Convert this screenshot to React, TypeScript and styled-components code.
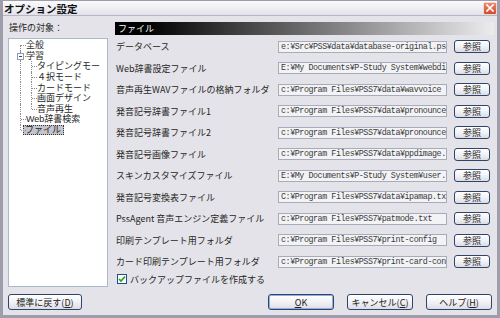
import React from 'react';
import styled, { createGlobalStyle, css } from 'styled-components';

const jp = `"Noto Sans CJK JP", "Noto Sans", sans-serif`;
const treeFont = `"Liberation Sans", "Noto Sans CJK JP", sans-serif`;
const mono = `"Liberation Mono", "Noto Sans CJK JP", monospace`;

const GlobalStyle = createGlobalStyle`
  html, body { margin: 0; padding: 0; background: #e4e3e9; }
  body { width: 500px; height: 318px; overflow: hidden; }
  * { box-sizing: border-box; }
`;

const Window = styled.div`
  width: 500px;
  height: 318px;
  display: flex;
  flex-direction: column;
  background: #e4e3e9;
  border: 3px solid #9e9dab;
  border-top: 1px solid #9e9dab;
  font-family: ${jp};
  font-size: 9px;
  color: #262626;
`;

const TitleBar = styled.div`
  height: 15px;
  flex: none;
  display: flex;
  align-items: center;
  padding-left: 1px;
  background: linear-gradient(#fbfbfd, #e2e2ea);
  border-bottom: 1px solid #b6b6c2;
`;

const TitleText = styled.span`
  font-weight: bold;
  font-size: 10.5px;
  color: #111;
`;

const CloseButton = styled.div`
  margin-left: auto;
  width: 14px;
  height: 13px;
  border-radius: 2px;
  border: 1px solid #f2d6cf;
  background: linear-gradient(#e88a70, #d04a2c);
  display: flex;
  align-items: center;
  justify-content: center;
`;

const Body = styled.div`
  flex: 1;
  display: grid;
  grid-template-columns: 100px 1fr;
  grid-template-rows: 1fr 16px;
  column-gap: 7px;
  row-gap: 7px;
  padding: 6px 3px 5px 5px;
  min-height: 0;
`;

const LeftColumn = styled.div`
  display: flex;
  flex-direction: column;
  min-height: 0;
`;

const SectionLabel = styled.div`
  height: 16px;
  line-height: 12px;
  padding-left: 1px;
  flex: none;
`;

const TreeBox = styled.div`
  flex: 1;
  background: #fff;
  border: 1px solid #a9b8cc;
  padding-top: 1px;
  overflow: hidden;
  font-family: ${treeFont};
`;

const TreeRow = styled.div`
  height: 10.6px;
  display: flex;
  align-items: stretch;
  padding-left: 6px;
  white-space: nowrap;
`;

type VLine = 'full' | 'top' | 'bottom' | 'none';

const Guide = styled.div<{ $v: VLine; $h?: boolean }>`
  width: 11px;
  flex: none;
  position: relative;
  &::before {
    content: '';
    position: absolute;
    left: 5px;
    border-left: 1px dotted #8c8c8c;
    ${(p) =>
      p.$v === 'none'
        ? css`display: none;`
        : p.$v === 'full'
        ? css`top: 0; bottom: 0;`
        : p.$v === 'top'
        ? css`top: 0; height: 50%;`
        : css`top: 50%; bottom: 0;`}
  }
  &::after {
    content: '';
    position: absolute;
    left: 6px;
    right: 0;
    top: 50%;
    border-top: 1px dotted #8c8c8c;
    display: ${(p) => (p.$h ? 'block' : 'none')};
  }
`;

const Expander = styled.span`
  position: absolute;
  left: 2px;
  top: 50%;
  margin-top: -3px;
  width: 7px;
  height: 7px;
  border: 1px solid #8d9fb8;
  background: #fff;
  z-index: 1;
  &::after {
    content: '';
    position: absolute;
    left: 1px;
    right: 1px;
    top: 2px;
    border-top: 1px solid #444;
  }
`;

const TreeLabel = styled.span<{ $selected?: boolean }>`
  display: flex;
  align-items: center;
  line-height: 10px;
  ${(p) =>
    p.$selected &&
    css`
      margin-left: -3px;
      padding: 0 3px 0 2px;
      background: #c4c4cc;
      outline: 1px dotted #333;
      outline-offset: -1px;
    `}
`;

const RightColumn = styled.div`
  display: flex;
  flex-direction: column;
  min-height: 0;
`;

const Header = styled.div`
  height: 13px;
  flex: none;
  line-height: 13px;
  padding-left: 3px;
  color: #fff;
  background: linear-gradient(to right, #000 0%, #000 8%, #ececef 100%);
`;

const Rows = styled.div`
  margin-top: 1px;
  display: flex;
  flex-direction: column;
`;

const Row = styled.div`
  height: 21.5px;
  display: grid;
  grid-template-columns: 155px 169px 36px;
  column-gap: 7px;
  align-items: center;
  padding-left: 1px;
`;

const RowLabel = styled.span`
  white-space: nowrap;
`;

const PathField = styled.div`
  height: 12px;
  border: 1px solid #a5acbb;
  background: #f3f3f6;
  font-family: ${mono};
  font-size: 8.4px;
  letter-spacing: -0.45px;
  line-height: 10px;
  padding: 0 2px;
  white-space: nowrap;
  overflow: hidden;
  color: #3a3a3a;
`;

const XpButton = styled.button<{ $width?: number; $default?: boolean }>`
  width: ${(p) => (p.$width ? `${p.$width}px` : '100%')};
  height: 100%;
  padding: 0;
  margin: 0;
  border: 1px solid #2f4468;
  border-radius: 3px;
  background: linear-gradient(#ffffff 0%, #f2f2f6 50%, #dcdce4 100%);
  font-family: ${jp};
  font-size: 9px;
  color: #222;
  display: flex;
  align-items: center;
  justify-content: center;
  box-shadow: ${(p) => (p.$default ? 'inset 0 0 0 1px #8fb0e6' : 'none')};
  u { text-decoration: underline; }
`;

const BrowseButton = styled(XpButton)`
  height: 13px;
`;

const CheckRow = styled.label`
  height: 13px;
  display: flex;
  align-items: center;
  gap: 3px;
  padding-left: 2px;
`;

const CheckBox = styled.span`
  width: 10px;
  height: 10px;
  border: 1px solid #1f4f82;
  background: #fff;
  display: flex;
  align-items: center;
  justify-content: center;
`;

const FooterRight = styled.div`
  display: flex;
  justify-content: flex-end;
  gap: 13px;
  padding-right: 2px;
`;

type TreeItem = {
  label: string;
  guides: { v: VLine; h?: boolean; exp?: boolean }[];
  selected?: boolean;
};

const tree: TreeItem[] = [
  { label: '全般', guides: [{ v: 'bottom', h: true }] },
  { label: '学習', guides: [{ v: 'full', h: true, exp: true }] },
  { label: 'タイピングモー', guides: [{ v: 'full' }, { v: 'full', h: true }] },
  { label: '４択モード', guides: [{ v: 'full' }, { v: 'full', h: true }] },
  { label: 'カードモード', guides: [{ v: 'full' }, { v: 'full', h: true }] },
  { label: '画面デザイン', guides: [{ v: 'full' }, { v: 'full', h: true }] },
  { label: '音声再生', guides: [{ v: 'full' }, { v: 'top', h: true }] },
  { label: 'Web辞書検索', guides: [{ v: 'full', h: true }] },
  { label: 'ファイル', guides: [{ v: 'top', h: true }], selected: true },
];

const rows: [string, string][] = [
  ['データベース', 'e:¥Src¥PSS¥data¥database-original.ps'],
  ['Web辞書設定ファイル', 'E:¥My Documents¥P-Study System¥webdi'],
  ['音声再生WAVファイルの格納フォルダ', 'c:¥Program Files¥PSS7¥data¥wavvoice'],
  ['発音記号辞書ファイル1', 'c:¥Program Files¥PSS7¥data¥pronounce'],
  ['発音記号辞書ファイル2', 'c:¥Program Files¥PSS7¥data¥pronounce'],
  ['発音記号画像ファイル', 'c:¥Program Files¥PSS7¥data¥ppdimage.'],
  ['スキンカスタマイズファイル', 'E:¥My Documents¥P-Study System¥user.'],
  ['発音記号変換表ファイル', 'C:¥Program Files¥PSS7¥data¥ipamap.tx'],
  ['PssAgent 音声エンジン定義ファイル', 'c:¥Program Files¥PSS7¥patmode.txt'],
  ['印刷テンプレート用フォルダ', 'c:¥Program Files¥PSS7¥print-config'],
  ['カード印刷テンプレート用フォルダ', 'c:¥Program Files¥PSS7¥print-card-con'],
];

export default function App() {
  return (
    <>
      <GlobalStyle />
      <Window>
        <TitleBar>
          <TitleText>オプション設定</TitleText>
          <CloseButton>
            <svg width="8" height="8" viewBox="0 0 8 8">
              <path d="M1 1 L7 7 M7 1 L1 7" stroke="#fff" strokeWidth="1.6" strokeLinecap="square" />
            </svg>
          </CloseButton>
        </TitleBar>
        <Body>
          <LeftColumn>
            <SectionLabel>操作の対象：</SectionLabel>
            <TreeBox>
              {tree.map((item) => (
                <TreeRow key={item.label}>
                  {item.guides.map((g, i) => (
                    <Guide key={i} $v={g.v} $h={g.h}>
                      {g.exp && <Expander />}
                    </Guide>
                  ))}
                  <TreeLabel $selected={item.selected}>{item.label}</TreeLabel>
                </TreeRow>
              ))}
            </TreeBox>
          </LeftColumn>
          <RightColumn>
            <Header>ファイル</Header>
            <Rows>
              {rows.map(([label, path]) => (
                <Row key={label}>
                  <RowLabel>{label}</RowLabel>
                  <PathField>{path}</PathField>
                  <BrowseButton>参照</BrowseButton>
                </Row>
              ))}
              <CheckRow>
                <CheckBox>
                  <svg width="8" height="8" viewBox="0 0 8 8">
                    <path d="M1 4 L3 6 L7 1.5" stroke="#21a121" strokeWidth="1.6" fill="none" />
                  </svg>
                </CheckBox>
                バックアップファイルを作成する
              </CheckRow>
            </Rows>
          </RightColumn>
          <XpButton $width={74}>
            標準に戻す(<u>D</u>)
          </XpButton>
          <FooterRight>
            <XpButton $width={66} $default>
              <u>O</u>K
            </XpButton>
            <XpButton $width={66}>
              キャンセル(<u>C</u>)
            </XpButton>
            <XpButton $width={66}>
              ヘルプ(<u>H</u>)
            </XpButton>
          </FooterRight>
        </Body>
      </Window>
    </>
  );
}
